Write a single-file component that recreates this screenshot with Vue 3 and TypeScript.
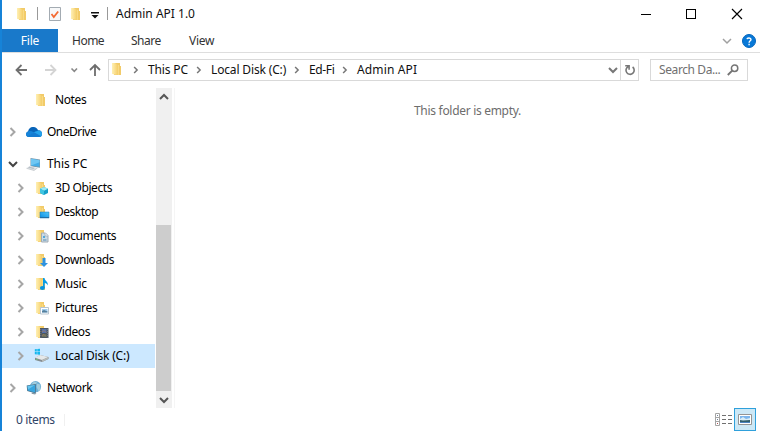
<script setup lang="ts">
interface Item {
  label: string
  icon: string
  level: number
  arrow: '' | 'right' | 'down'
  spacing: number
  gap?: boolean
  selected?: boolean
}

const items: Item[] = [
  { label: 'Notes', icon: 'folder', level: 1, arrow: '', spacing: -0.4 },
  { label: 'OneDrive', icon: 'cloud', level: 0, arrow: 'right', spacing: -0.5, gap: true },
  { label: 'This PC', icon: 'pc', level: 0, arrow: 'down', spacing: -0.1, gap: true },
  { label: '3D Objects', icon: 'cube', level: 1, arrow: 'right', spacing: -0.42 },
  { label: 'Desktop', icon: 'desktop', level: 1, arrow: 'right', spacing: -0.5 },
  { label: 'Documents', icon: 'document', level: 1, arrow: 'right', spacing: -0.4 },
  { label: 'Downloads', icon: 'download', level: 1, arrow: 'right', spacing: -0.42 },
  { label: 'Music', icon: 'music', level: 1, arrow: 'right', spacing: -0.2 },
  { label: 'Pictures', icon: 'picture', level: 1, arrow: 'right', spacing: -0.35 },
  { label: 'Videos', icon: 'video', level: 1, arrow: 'right', spacing: -0.4 },
  { label: 'Local Disk (C:)', icon: 'disk', level: 1, arrow: 'right', spacing: -0.2, selected: true },
  { label: 'Network', icon: 'network', level: 0, arrow: 'right', spacing: -0.45, gap: true },
]

const folderIcons = ['folder', 'cube', 'desktop', 'document', 'download', 'music', 'picture', 'video']
const crumbs = ['This PC', 'Local Disk (C:)', 'Ed-Fi', 'Admin API']
</script>

<template>
  <div class="window">
    <svg class="defs" width="0" height="0" aria-hidden="true">
      <defs>
        <linearGradient id="gold" x1="0" x2="1"><stop offset="0" stop-color="#fff0b4" /><stop offset="1" stop-color="#f4cd68" /></linearGradient>
        <linearGradient id="blue" x1="0" y1="1" x2="1" y2="0"><stop offset="0" stop-color="#0a8de2" /><stop offset="1" stop-color="#53c8fa" /></linearGradient>
        <symbol id="folder" viewBox="0 0 16 16">
          <path d="M4 2h6v3h1v9H4z" fill="#f2cb69" />
          <path d="M2 2h3l3 2v10l-6-1z" fill="url(#gold)" />
          <path d="M8 4h1v10H8z" fill="#f8da86" />
        </symbol>
        <symbol id="chev" viewBox="0 0 8 10"><path d="M1.5 1l4 4-4 4" fill="none" stroke="currentColor" stroke-width="2" /></symbol>
        <symbol id="down" viewBox="0 0 10 8"><path d="M1 2l4 4 4-4" fill="none" stroke="currentColor" stroke-width="2" /></symbol>
      </defs>
    </svg>

    <header class="titlebar">
      <svg class="t-folder" width="16" height="16"><use href="#folder" /></svg>
      <i class="t-sep"></i>
      <svg class="t-check" width="12" height="14" viewBox="0 0 12 14">
        <path d="M.5.5h11v13H.5z" fill="#f7f8f9" stroke="#a3abb2" />
        <path d="M2.5 7l2.3 3 4.4-5.5" fill="none" stroke="#f36a32" stroke-width="1.8" />
      </svg>
      <svg class="t-folder2" width="16" height="16"><use href="#folder" /></svg>
      <svg class="t-menu" width="8" height="7" viewBox="0 0 8 7"><path d="M0 0h8v1.4H0zM.5 3h7L4 6.5z" fill="#111" /></svg>
      <i class="t-sep two"></i>
      <span class="title">Admin API 1.0</span>
      <svg class="controls" width="102" height="12" viewBox="0 0 102 12" fill="none" stroke="#000">
        <path d="M0 6.5h10" />
        <rect x="45.5" y="1.5" width="9" height="9" />
        <path d="M91 1l10 10M101 1L91 11" stroke-width="1.15" />
      </svg>
    </header>

    <nav class="tabs">
      <span class="file">File</span>
      <span class="tab home">Home</span>
      <span class="tab share">Share</span>
      <span class="tab view">View</span>
      <svg class="collapse" width="10" height="8" viewBox="0 0 10 8"><path d="M1 2l4 4 4-4" fill="none" stroke="currentColor" stroke-width="1.5" /></svg>
      <svg class="help" width="14" height="14" viewBox="0 0 14 14">
        <circle cx="7" cy="7" r="6.5" fill="#0878d7" stroke="#0566bc" />
        <path d="M5 5.1C5.2 3.5 9 3.5 9 5.5 9 6.8 7.1 6.7 7.1 8.7" fill="none" stroke="#fff" stroke-width="1.4" />
        <path d="M6.4 9.8h1.4v1.4H6.4z" fill="#fff" />
      </svg>
    </nav>

    <div class="navigation">
      <svg class="arrows" width="90" height="14" viewBox="0 0 90 14" fill="none" stroke-width="1.8">
        <path d="M12 7H1.5M6.5 2l-5 5 5 5" stroke="#707070" />
        <path d="M30 7h10.5M35.5 2l5 5-5 5" stroke="#d4d4d4" />
        <path d="M56.5 5.5l2.8 2.8L62 5.5" stroke="#888" stroke-width="1.6" />
        <path d="M80 13V2M75 7l5-5 5 5" stroke="#6d6d6d" />
      </svg>
      <div class="address">
        <svg class="a-folder" width="16" height="16"><use href="#folder" /></svg>
        <template v-for="(crumb, i) in crumbs" :key="crumb">
          <svg class="crumb-arrow" :class="'arrow' + i" width="6" height="8"><use href="#chev" /></svg>
          <span class="crumb" :class="'crumb' + i">{{ crumb }}</span>
        </template>
        <svg class="address-down" width="10" height="8"><use href="#down" /></svg>
        <span class="refresh">
          <svg width="12" height="12" viewBox="0 0 12 12" fill="none" stroke="#777" stroke-width="1.6">
            <path d="M8.6 3A4.1 4.1 0 1 1 4.2 2.6M1.2 1.8h3.9v4" />
          </svg>
        </span>
      </div>
      <div class="search">
        <span>Search Da...</span>
        <svg width="12" height="12" viewBox="0 0 12 12" fill="none" stroke="#757575">
          <circle cx="7.6" cy="4.2" r="3.2" stroke-width="1.5" />
          <path d="M5.2 6.6L.8 11" stroke-width="1.9" />
        </svg>
      </div>
    </div>

    <main>
      <aside>
        <div
          v-for="item in items"
          :key="item.label"
          class="row"
          :class="['level' + item.level, { gap: item.gap, selected: item.selected }]"
        >
          <span class="toggle">
            <svg v-if="item.arrow === 'right'" width="8" height="10"><use href="#chev" /></svg>
            <svg v-if="item.arrow === 'down'" class="open" width="10" height="8"><use href="#down" /></svg>
          </span>
          <svg class="icon" width="16" height="16" viewBox="0 0 16 16">
            <use v-if="folderIcons.includes(item.icon)" href="#folder" />
            <g v-if="item.icon === 'cloud'">
              <path d="M2 13C-.5 12-.5 8.3 2 7.4 2.8 4 5 2.5 7.5 3c2-.1 3.8 1.3 4.6 3.3C15 6.2 16 8 16 10c0 2-1 3-3 3z" fill="#0864b9" />
              <path d="M2 7.4C4 6.7 6 7.2 7.8 8.4L1 12.3C-.5 11-.3 8.4 2 7.4" fill="#1683d9" />
              <path d="M1 12.3l7-4c2-1.2 3.1-1.2 4.5-1.8C15 6.4 16 8 16 10c0 2-1 3-3 3H3z" fill="#25a3ec" />
              <path d="M1 12.3l7-4 6.8 3.8c-.5.7-1 .9-1.8.9H3z" fill="#147bd1" />
            </g>
            <g v-if="item.icon === 'pc'">
              <path d="M4.5 2L14 3.5v8.2l-9.5-1.4z" fill="#7a98aa" />
              <path d="M5 2.8l8.5 1.4v6.6L5 9.6z" fill="#45aee9" />
              <path d="M5 2.8l8.5 1.4v2L5 9.6z" fill="#70c7f3" />
              <path d="M3.5 10l8 2-3.5 2.5-7.5-2.2z" fill="#dce1e5" />
              <path d="M3.4 10.7l5.1 1.4-1.2.9-5.3-1.5z" fill="#b5bec5" />
              <path d="M.5 12.3l7.5 2.2 3.5-2.5" fill="none" stroke="#b4babe" stroke-width=".6" />
            </g>
            <g v-if="item.icon === 'cube'">
              <path d="M10 7l4 1.8v4.3L10 15l-4-2V8.8z" fill="#159fc9" />
              <path d="M10 7l4 1.8-4 2-4-2z" fill="#9beaf5" />
              <path d="M6 8.8l4 2V15l-4-2z" fill="#40c5e2" />
            </g>
            <g v-if="item.icon === 'desktop'"><path d="M6 8h9v6H6z" fill="url(#blue)" stroke="#147bb9" stroke-width=".5" /><path d="M6 13h9v1H6z" fill="#216fa7" /></g>
            <g v-if="item.icon === 'document'">
              <path d="M7.5 5h4l2.5 2.5V14H7.5z" fill="#cbdce7" stroke="#a0abb5" />
              <path d="M11 5v3h3" fill="#eef3f7" stroke="#a0abb5" stroke-width=".7" />
              <path d="M9 8h2v2H9z" fill="#54a8da" />
              <path d="M9 11h3.5v2H9z" fill="#91b4cb" />
            </g>
            <path v-if="item.icon === 'download'" d="M8.5 6h3v5H14l-4 4-4-4h2.5z" fill="#2e92df" />
            <g v-if="item.icon === 'music'">
              <path d="M9 2h1.5c.3 3 4.2 3.6 3.2 7.6-.4-1.6-1.5-2.2-3-2.5V12H9z" fill="#079ce5" />
              <ellipse cx="8.4" cy="12" rx="2.5" ry="2" fill="#0794df" />
            </g>
            <g v-if="item.icon === 'picture'">
              <path d="M6.5 7.5h8v6.5h-8z" fill="#fff" stroke="#b7c5d0" />
              <path d="M8 9h5.5v3.5H8z" fill="#9dcdf0" />
              <path d="M8 11l2-1 3.5 1.5v1H8z" fill="#557f9c" />
            </g>
            <g v-if="item.icon === 'video'">
              <path d="M6 4h8.5v10H6z" fill="#4d565f" />
              <path d="M8 5h4.5v4H8z" fill="#5071b0" /><path d="M8 10h4.5v3H8z" fill="#626f5d" />
              <path d="M8 8l2-1.5 2.5 2M8 12l2-1.5 2 2" stroke="#a77b5d" fill="none" stroke-width=".8" />
              <path d="M6.8 5v8.5M13.7 5v8.5" stroke="#929ba4" stroke-width=".6" stroke-dasharray="1 1" />
            </g>
            <g v-if="item.icon === 'disk'">
              <path d="M.8 1.2l2-.2v2.5h-2zM3.3.9L6 .7v2.8H3.3zM.8 4h2v2.5l-2-.2zM3.3 4H6v2.8l-2.7-.3z" fill="#13b7ee" />
              <path d="M1 10l5-3 8.5 2v2L8 14l-7-2z" fill="#858c91" />
              <path d="M1 9.7L6 7l8.5 2L8 12z" fill="#e5e8e9" />
              <path d="M8 12l6.5-3v1.8L8 14z" fill="#b5bab9" />
              <path d="M2 11.3l1.5.4" stroke="#63ca75" />
            </g>
            <g v-if="item.icon === 'network'">
              <circle cx="9.5" cy="6.7" r="5.6" fill="#6baed5" />
              <path d="M8 1.4l3 .8-1 2-2 1-3-.5zM11 3.5l3 1 .5 4.5-2 2-2-4z" fill="#a4cddd" />
              <path d="M.7 5.5L9.8 4v9.5L1.2 11z" fill="#48738d" />
              <path d="M1.5 6.1L9 4.9v7.5l-7-2z" fill="#37a5df" />
              <path d="M1.5 6.1L9 4.9 2 9.5z" fill="#68c5ee" />
              <path d="M6 12.4l-.5 1.4 3.5.8 1.5-1z" fill="#8498a5" />
            </g>
          </svg>
          <span class="label" :style="{ letterSpacing: item.spacing + 'px' }">{{ item.label }}</span>
        </div>
      </aside>
      <div class="scrollbar">
        <svg class="scroll-up" width="10" height="8"><use href="#down" /></svg>
        <div class="thumb"></div>
        <svg class="scroll-down" width="10" height="8"><use href="#down" /></svg>
      </div>
      <section class="content">This folder is empty.</section>
    </main>

    <footer>
      <span class="count">0 items</span>
      <svg class="details" width="17" height="14" viewBox="0 0 17 14" fill="none">
        <path d="M.5.5h4v12h-4zM.5 4.5h4M.5 8.5h4" stroke="#a5a5a5" />
        <path d="M2 2.5h1M2 6.5h1" stroke="#6e8199" /><path d="M2 10.5h1" stroke="#ae5352" />
        <path d="M7 2.5h4M13 2.5h4M7 6.5h4M13 6.5h4M7 10.5h4M13 10.5h4" stroke="#707070" />
      </svg>
      <span class="thumbnail">
        <svg width="14" height="11" viewBox="0 0 14 11">
          <path d="M.5.5h13v10H.5z" fill="#fff" stroke="#949494" />
          <path d="M2 2h10v7H2z" fill="#7cb5ec" />
          <path d="M2 5l3-2 3 2 4-1v5H2z" fill="#d9edf6" />
          <path d="M2 6l3 .5L12 6v3H2z" fill="#315f6d" />
          <path d="M2 8h10v1H2z" fill="#4c83c0" />
        </svg>
      </span>
    </footer>
  </div>
</template>

<style>
body { margin: 0; overflow: hidden; background: #fff; }
</style>

<style scoped>
* { box-sizing: border-box; }
svg { display: block; flex: none; }
.defs { position: absolute; }
.window { width: 760px; height: 431px; display: flex; flex-direction: column; border-left: 2px solid #1683d8; background: #fff; color: #111; font: 12px/16px "Noto Sans", "Open Sans", sans-serif; white-space: nowrap; overflow: hidden; }
.titlebar { height: 29px; display: flex; align-items: center; flex: none; padding: 0 17px 2px 13px; }
.t-sep { width: 1px; height: 13px; margin-left: 6px; background: #999; }
.t-check { margin-left: 11px; }
.t-folder2 { margin-left: 8px; }
.t-menu { margin: 3px 0 0 6px; }
.t-sep.two { margin-left: 8px; }
.title { margin-left: 8px; letter-spacing: 0; }
.controls { margin-left: auto; }
.tabs { height: 24px; display: flex; flex: none; align-items: center; border-bottom: 1px solid #dedede; color: #333; letter-spacing: -.5px; }
.file { width: 56px; height: 23px; line-height: 24px; text-align: center; background: #1979ca; color: #fff; letter-spacing: -.2px; }
.tab { line-height: 24px; }
.home { width: 45px; margin-left: 14px; }
.share { width: 44px; margin-left: 14px; }
.view { width: 40px; margin-left: 14px; letter-spacing: -.3px; }
.collapse { margin-left: auto; color: #a0a0a0; }
.help { margin: 0 4px 0 10px; }
.navigation { height: 35px; display: flex; flex: none; padding: 6px 12px 0 13px; }
.arrows { margin-top: 4px; }
.address { width: 531px; height: 22px; margin-left: 3px; border: 1px solid #d9d9d9; display: flex; align-items: center; }
.a-folder { margin-left: 1px; margin-top: -2px; }
.crumb-arrow { color: #777; margin-right: 9px; }
.arrow0 { margin-left: 7px; }
.crumb { letter-spacing: -.15px; }
.crumb0 { width: 48px; }
.crumb1 { width: 83px; }
.crumb2 { width: 33px; letter-spacing: -.35px; }
.crumb3 { letter-spacing: .15px; }
.address-down { margin-left: auto; margin-right: 2px; color: #777; }
.refresh { width: 18px; height: 20px; border-left: 1px solid #d9d9d9; display: grid; place-items: center; }
.search { width: 98px; height: 22px; border: 1px solid #d9d9d9; margin-left: 11px; padding: 0 8px; display: flex; align-items: center; justify-content: space-between; color: #707070; letter-spacing: -.4px; }
main { height: 320px; display: flex; flex: none; }
aside { width: 154px; }
.row { height: 24px; width: 153px; display: flex; align-items: center; }
.selected { background: #cce8ff; }
.level0 { padding-left: 5px; }
.level1 { padding-left: 13px; }
.gap { margin-top: 8px; }
.toggle { width: 12px; display: grid; place-items: center; color: #a6a6a6; }
.open { color: #444; }
.icon { margin-left: 7px; }
.label { margin-left: 5px; color: #000; }
.scrollbar { width: 16px; background: #f0f0f0; display: flex; flex-direction: column; align-items: center; color: #555; }
.scroll-up { margin-top: 5px; transform: rotate(180deg); }
.thumb { width: 15px; height: 166px; margin-top: 124px; align-self: flex-start; background: #cdcdcd; }
.scroll-down { margin-top: 5px; }
.content { flex: 1; margin-left: 2px; border-left: 1px solid #f5f5f5; padding-top: 15px; text-align: center; color: #6d6d6d; letter-spacing: -.3px; }
footer { height: 23px; display: flex; align-items: center; flex: none; padding: 0 4px 0 14px; color: #304467; letter-spacing: -.35px; }
.count { width: 49px; height: 12px; line-height: 12px; border-right: 1px solid #f0f0f0; }
.details { margin-left: auto; margin-right: 2px; }
.thumbnail { width: 22px; height: 23px; background: #cce8f6; border: 1px solid #2fa0db; display: grid; place-items: center; }
</style>
